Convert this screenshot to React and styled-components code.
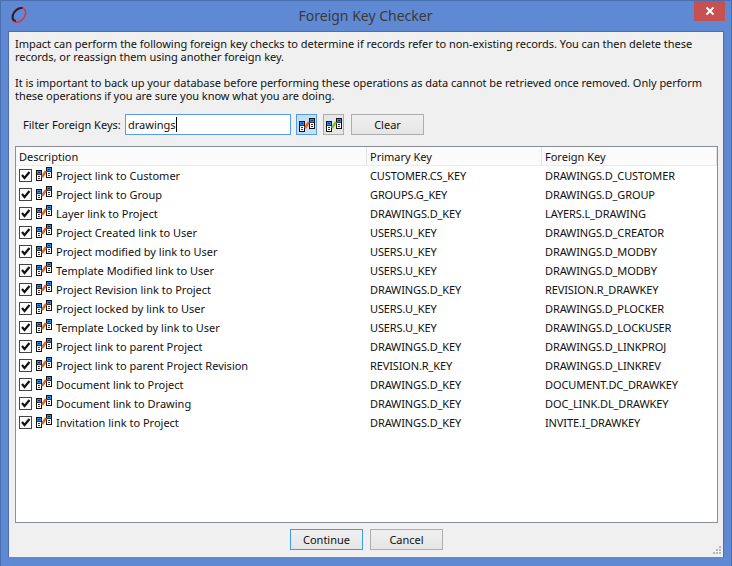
import React from 'react';
import styled, { createGlobalStyle } from 'styled-components';

const GlobalStyle = createGlobalStyle`
    html, body {
        margin: 0;
        padding: 0;
        background: #5f89d3;
    }
`;

const Window = styled.div`
    box-sizing: border-box;
    width: 732px;
    height: 566px;
    display: flex;
    flex-direction: column;
    background-color: #5f89d3;
    border: 1px solid #4a6fae;
    border-bottom: none;
    font-family: "Noto Sans", sans-serif;
    font-size: 11px;
    color: #111;
`;

const TitleBar = styled.div`
    height: 30px;
    flex: none;
    display: flex;
    align-items: flex-start;
    padding-left: 9px;
`;

const LogoMark = styled.svg`
    margin-top: 5px;
    flex: none;
`;

const Title = styled.div`
    flex: 1;
    padding: 5px 0 0 9px;
    text-align: center;
    font-size: 14px;
    line-height: 20px;
    color: #3a3a3a;
`;

const CloseButton = styled.div`
    width: 31px;
    height: 20px;
    margin-right: 6px;
    display: flex;
    align-items: center;
    justify-content: center;
    background-color: #c75050;
`;

const Client = styled.div`
    position: relative;
    box-sizing: border-box;
    width: 716px;
    height: 526px;
    margin-left: 7px;
    padding: 5px 7px 0 6px;
    display: flex;
    flex-direction: column;
    background-color: #f0f0f0;
    border: 1px solid #4a6fae;
    border-bottom: none;
`;

const Intro = styled.p`
    margin: 0 0 13px;
    line-height: 13px;
    height: 26px;
    letter-spacing: -0.035px;
    white-space: nowrap;
`;

const FilterRow = styled.div`
    display: flex;
    align-items: center;
    height: 21px;
    margin-top: -1px;
    padding-left: 8px;
`;

const FilterLabel = styled.label`
    width: 102px;
    flex: none;
`;

const FilterInput = styled.div`
    box-sizing: border-box;
    width: 166px;
    height: 21px;
    padding-left: 2px;
    display: flex;
    align-items: center;
    background: #fff;
    border: 1px solid #569de5;
`;

const Caret = styled.span`
    width: 1px;
    height: 15px;
    background: #000;
`;

const ToggleButton = styled.div`
    box-sizing: border-box;
    width: 21px;
    height: 21px;
    margin-left: ${(p) => p.$gap}px;
    display: flex;
    align-items: center;
    justify-content: center;
    background: ${(p) => (p.$active ? '#c4e0f8' : '#e6e6e6')};
    border: 1px solid ${(p) => (p.$active ? '#569de5' : '#adadad')};
`;

const Button = styled.button`
    box-sizing: border-box;
    width: 73px;
    height: 21px;
    margin: ${(p) => p.$margin || 0};
    padding: 0;
    font: inherit;
    color: #111;
    background: linear-gradient(#f0f0f0, #e5e5e5);
    border: 1px solid ${(p) => (p.$focused ? '#3c9bf0' : '#adadad')};
`;

const ListPanel = styled.div`
    box-sizing: border-box;
    width: 703px;
    height: 377px;
    margin-top: 11px;
    background: #fff;
    border: 1px solid #8a8f96;
`;

const Columns = styled.div`
    display: grid;
    grid-template-columns: 351px 175px 1fr;
    height: 19px;
    align-items: center;
`;

const HeaderCell = styled.div`
    height: 19px;
    line-height: 20px;
    padding-left: 3px;
    background: #fbfbfb;
    border-right: 1px solid #e4e4e4;
    border-bottom: 1px solid #ebebeb;
    box-sizing: border-box;
`;

const DescriptionCell = styled.div`
    display: flex;
    align-items: center;
    padding-left: 3px;
`;

const Check = styled.span`
    box-sizing: border-box;
    width: 13px;
    height: 13px;
    margin-right: 4px;
    display: flex;
    background: #fff;
    border: 1px solid #444;
`;

const RowIcon = styled.span`
    display: flex;
    margin-bottom: 3px;
`;

const DescriptionText = styled.span`
    margin-left: 4px;
`;

const Cell = styled.div`
    padding-left: 3px;
    letter-spacing: -0.12px;
`;

const Footer = styled.div`
    display: flex;
    justify-content: center;
    gap: 7px;
    margin-top: 6px;
    padding-left: 2px;
`;

const Grip = styled.svg`
    position: absolute;
    right: 1px;
    bottom: 2px;
`;

const rows = [
    ['Project link to Customer', 'CUSTOMER.CS_KEY', 'DRAWINGS.D_CUSTOMER'],
    ['Project link to Group', 'GROUPS.G_KEY', 'DRAWINGS.D_GROUP'],
    ['Layer link to Project', 'DRAWINGS.D_KEY', 'LAYERS.L_DRAWING'],
    ['Project Created link to User', 'USERS.U_KEY', 'DRAWINGS.D_CREATOR'],
    ['Project modified by link to User', 'USERS.U_KEY', 'DRAWINGS.D_MODBY'],
    ['Template Modified link to User', 'USERS.U_KEY', 'DRAWINGS.D_MODBY'],
    ['Project Revision link to Project', 'DRAWINGS.D_KEY', 'REVISION.R_DRAWKEY'],
    ['Project locked by link to User', 'USERS.U_KEY', 'DRAWINGS.D_PLOCKER'],
    ['Template Locked by link to User', 'USERS.U_KEY', 'DRAWINGS.D_LOCKUSER'],
    ['Project link to parent Project', 'DRAWINGS.D_KEY', 'DRAWINGS.D_LINKPROJ'],
    ['Project link to parent Project Revision', 'REVISION.R_KEY', 'DRAWINGS.D_LINKREV'],
    ['Document link to Project', 'DRAWINGS.D_KEY', 'DOCUMENT.DC_DRAWKEY'],
    ['Document link to Drawing', 'DRAWINGS.D_KEY', 'DOC_LINK.DL_DRAWKEY'],
    ['Invitation link to Project', 'DRAWINGS.D_KEY', 'INVITE.I_DRAWKEY'],
];

const Logo = () => (
    <LogoMark width="18" height="18" viewBox="0 0 18 18">
        <ellipse cx="9" cy="9" rx="8" ry="5.6" transform="rotate(-50 9 9)" fill="none" stroke="#d23c44" strokeWidth="1.7" />
        <path d="M5.8 15 C2 14.5 1.5 10 4.5 6 C7 3 10 1.5 12.5 2" fill="none" stroke="#22232c" strokeWidth="2" />
    </LogoMark>
);

const CloseIcon = () => (
    <svg width="10" height="10" viewBox="0 0 10 10">
        <path d="M1.5 1.5 L8.5 8.5 M8.5 1.5 L1.5 8.5" stroke="#fff" strokeWidth="2" />
    </svg>
);

const TickIcon = () => (
    <svg width="11" height="11" viewBox="0 0 11 11">
        <path d="M2 5 L4.5 8 L9.5 2" fill="none" stroke="#111" strokeWidth="2.2" />
    </svg>
);

const LinkIcon = ({ color = '#e8621c' }) => (
    <svg width="16" height="14" viewBox="0 0 16 14">
        <rect x="0.5" y="3.5" width="5" height="10" fill="#fff" stroke="#111" />
        <rect x="1" y="4" width="4" height="3" fill="#1c8ff0" />
        <rect x="2" y="5" width="2" height="1" fill="#0b2c66" />
        <path d="M1 7.5 H5 M2 9.5 H4 M2 11.5 H4" stroke="#333" />
        <rect x="10.5" y="0.5" width="5" height="10" fill="#fff" stroke="#111" />
        <rect x="11" y="1" width="4" height="3" fill="#1c8ff0" />
        <rect x="12" y="2" width="2" height="1" fill="#0b2c66" />
        <path d="M11 4.5 H15 M12 6.5 H14 M12 8.5 H14" stroke="#333" />
        <path d="M6 10 L10 4" stroke={color} strokeWidth="2.4" />
    </svg>
);

const App = () => {
    return (
        <>
            <GlobalStyle />
            <Window>
                <TitleBar>
                    <Logo />
                    <Title>Foreign Key Checker</Title>
                    <CloseButton><CloseIcon /></CloseButton>
                </TitleBar>
                <Client>
                    <Intro>
                        Impact can perform the following foreign key checks to determine if records refer to non-existing records. You can then delete these<br />
                        records, or reassign them using another foreign key.
                    </Intro>
                    <Intro>
                        It is important to back up your database before performing these operations as data cannot be retrieved once removed. Only perform<br />
                        these operations if you are sure you know what you are doing.
                    </Intro>
                    <FilterRow>
                        <FilterLabel>Filter Foreign Keys:</FilterLabel>
                        <FilterInput>drawings<Caret /></FilterInput>
                        <ToggleButton $active $gap={5}><LinkIcon /></ToggleButton>
                        <ToggleButton $gap={6}><LinkIcon color="#8cbf26" /></ToggleButton>
                        <Button $margin="0 0 0 7px">Clear</Button>
                    </FilterRow>
                    <ListPanel>
                        <Columns>
                            <HeaderCell>Description</HeaderCell>
                            <HeaderCell>Primary Key</HeaderCell>
                            <HeaderCell>Foreign Key</HeaderCell>
                        </Columns>
                        {rows.map(([description, primary, foreign]) => (
                            <Columns key={description}>
                                <DescriptionCell>
                                    <Check><TickIcon /></Check>
                                    <RowIcon><LinkIcon /></RowIcon>
                                    <DescriptionText>{description}</DescriptionText>
                                </DescriptionCell>
                                <Cell>{primary}</Cell>
                                <Cell>{foreign}</Cell>
                            </Columns>
                        ))}
                    </ListPanel>
                    <Footer>
                        <Button $focused>Continue</Button>
                        <Button>Cancel</Button>
                    </Footer>
                    <Grip width="9" height="9" viewBox="0 0 9 9">
                        <path d="M6 0h2v2H6z M3 3h2v2H3z M6 3h2v2H6z M0 6h2v2H0z M3 6h2v2H3z M6 6h2v2H6z" fill="#b8b8b8" />
                    </Grip>
                </Client>
            </Window>
        </>
    );
};

export default App;
